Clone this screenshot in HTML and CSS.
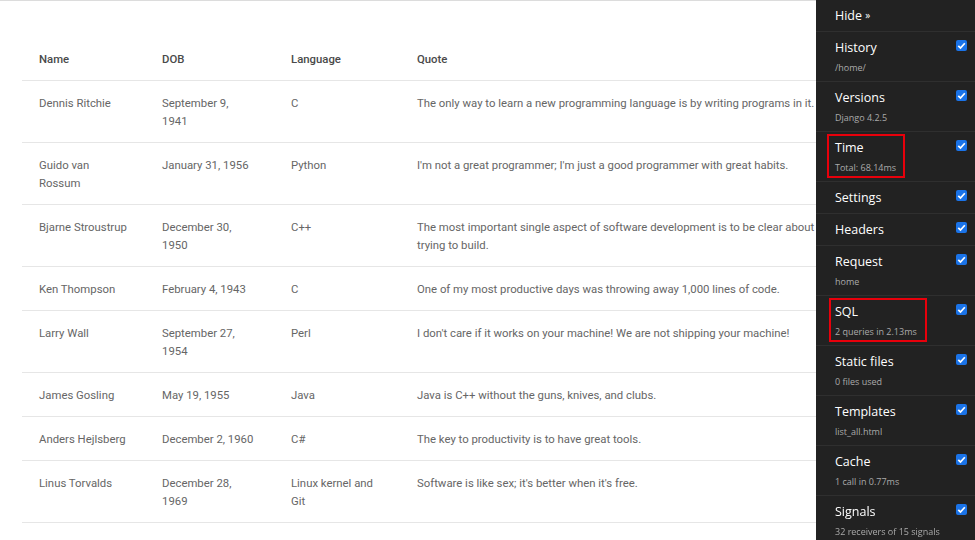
FILE: index.html
```html
<!DOCTYPE html>
<html>
<head>
<meta charset="utf-8">
<link rel="stylesheet" href="styles.css">
</head>
<body>
<div class="page">
  <table class="people">
    <colgroup>
      <col class="c-name"><col class="c-dob"><col class="c-lang"><col class="c-quote">
    </colgroup>
    <thead>
      <tr><th>Name</th><th>DOB</th><th>Language</th><th>Quote</th></tr>
    </thead>
    <tbody>
      <tr><td>Dennis Ritchie</td><td>September 9, 1941</td><td>C</td><td>The only way to learn a new programming language is by writing programs in it.</td></tr>
      <tr><td>Guido van Rossum</td><td>January 31, 1956</td><td>Python</td><td>I'm not a great programmer; I'm just a good programmer with great habits.</td></tr>
      <tr><td>Bjarne Stroustrup</td><td>December 30, 1950</td><td>C++</td><td>The most important single aspect of software development is to be clear about what you are trying to build.</td></tr>
      <tr><td>Ken Thompson</td><td>February 4, 1943</td><td>C</td><td>One of my most productive days was throwing away 1,000 lines of code.</td></tr>
      <tr><td>Larry Wall</td><td>September 27, 1954</td><td>Perl</td><td>I don't care if it works on your machine! We are not shipping your machine!</td></tr>
      <tr><td>James Gosling</td><td>May 19, 1955</td><td>Java</td><td>Java is C++ without the guns, knives, and clubs.</td></tr>
      <tr><td>Anders Hejlsberg</td><td>December 2, 1960</td><td>C#</td><td>The key to productivity is to have great tools.</td></tr>
      <tr><td>Linus Torvalds</td><td>December 28, 1969</td><td>Linux kernel and Git</td><td>Software is like sex; it's better when it's free.</td></tr>
    </tbody>
  </table>
</div>

<aside class="toolbar">
  <div class="hide">Hide <span class="raquo">&raquo;</span></div>
  <div class="panel"><div class="title">History</div><div class="sub">/home/</div><span class="check"><svg viewBox="0 0 11 11"><path d="M2.3 5.8 L4.5 8 L8.8 3.2" fill="none" stroke="#fff" stroke-width="1.7"/></svg></span></div>
  <div class="panel"><div class="title">Versions</div><div class="sub">Django 4.2.5</div><span class="check"><svg viewBox="0 0 11 11"><path d="M2.3 5.8 L4.5 8 L8.8 3.2" fill="none" stroke="#fff" stroke-width="1.7"/></svg></span></div>
  <div class="panel"><div class="title">Time</div><div class="sub">Total: 68.14ms</div><span class="check"><svg viewBox="0 0 11 11"><path d="M2.3 5.8 L4.5 8 L8.8 3.2" fill="none" stroke="#fff" stroke-width="1.7"/></svg></span><span class="mark mark-time"></span></div>
  <div class="panel short"><div class="title">Settings</div><span class="check"><svg viewBox="0 0 11 11"><path d="M2.3 5.8 L4.5 8 L8.8 3.2" fill="none" stroke="#fff" stroke-width="1.7"/></svg></span></div>
  <div class="panel short"><div class="title">Headers</div><span class="check"><svg viewBox="0 0 11 11"><path d="M2.3 5.8 L4.5 8 L8.8 3.2" fill="none" stroke="#fff" stroke-width="1.7"/></svg></span></div>
  <div class="panel"><div class="title">Request</div><div class="sub">home</div><span class="check"><svg viewBox="0 0 11 11"><path d="M2.3 5.8 L4.5 8 L8.8 3.2" fill="none" stroke="#fff" stroke-width="1.7"/></svg></span></div>
  <div class="panel"><div class="title">SQL</div><div class="sub">2 queries in 2.13ms</div><span class="check"><svg viewBox="0 0 11 11"><path d="M2.3 5.8 L4.5 8 L8.8 3.2" fill="none" stroke="#fff" stroke-width="1.7"/></svg></span><span class="mark mark-sql"></span></div>
  <div class="panel"><div class="title">Static files</div><div class="sub">0 files used</div><span class="check"><svg viewBox="0 0 11 11"><path d="M2.3 5.8 L4.5 8 L8.8 3.2" fill="none" stroke="#fff" stroke-width="1.7"/></svg></span></div>
  <div class="panel"><div class="title">Templates</div><div class="sub">list_all.html</div><span class="check"><svg viewBox="0 0 11 11"><path d="M2.3 5.8 L4.5 8 L8.8 3.2" fill="none" stroke="#fff" stroke-width="1.7"/></svg></span></div>
  <div class="panel"><div class="title">Cache</div><div class="sub">1 call in 0.77ms</div><span class="check"><svg viewBox="0 0 11 11"><path d="M2.3 5.8 L4.5 8 L8.8 3.2" fill="none" stroke="#fff" stroke-width="1.7"/></svg></span></div>
  <div class="panel"><div class="title">Signals</div><div class="sub">32 receivers of 15 signals</div><span class="check"><svg viewBox="0 0 11 11"><path d="M2.3 5.8 L4.5 8 L8.8 3.2" fill="none" stroke="#fff" stroke-width="1.7"/></svg></span></div>
</aside>
</body>
</html>
```
FILE: styles.css
```css
html, body {
  margin: 0;
  padding: 0;
  background: #fff;
  overflow: hidden;
}
body {
  border-top: 1px solid #dcdcdc;
  font-family: Roboto, "Liberation Sans", sans-serif;
}
.page {
  padding: 36px 22px 0 22px;
}
.people {
  border-collapse: collapse;
  table-layout: fixed;
  width: 887px;
  font-size: 11.35px;
  line-height: 18px;
  color: #666;
}
.c-name { width: 123px; }
.c-dob { width: 129px; }
.c-lang { width: 126px; }
.c-quote { width: auto; }
.people th,
.people td {
  text-align: left;
  vertical-align: top;
  padding: 13px 17px 12px 17px;
  border-bottom: 1px solid #e6e6e6;
}
.people td:nth-child(2) {
  padding-right: 20px;
}
.people th {
  font-weight: 500;
  color: #4a4a4a;
}

.toolbar {
  position: fixed;
  top: 0;
  right: 0;
  width: 159px;
  height: 100%;
  background: #222;
  font-family: "Open Sans", "Noto Sans", sans-serif;
  color: #fff;
}
.hide {
  height: 32px;
  box-sizing: border-box;
  padding: 7px 0 0 19px;
  font-size: 12.5px;
  line-height: 18px;
  border-bottom: 1px solid #2f2f2f;
}
.raquo {
  font-size: 10px;
  position: relative;
  top: -1px;
}
.panel {
  position: relative;
  height: 50px;
  box-sizing: border-box;
  padding: 7px 0 0 19px;
  border-bottom: 1px solid #2f2f2f;
}
.panel.short {
  height: 32px;
  padding-top: 7px;
}
.title {
  font-size: 12.5px;
  line-height: 18px;
}
.sub {
  font-size: 9px;
  line-height: 12px;
  margin-top: 5px;
  color: #aaa;
}
.check {
  position: absolute;
  top: 8px;
  right: 8px;
  width: 11px;
  height: 11px;
  border-radius: 2px;
  background: #1a73e8;
}
.check svg {
  display: block;
  width: 11px;
  height: 11px;
}
.mark {
  position: absolute;
  border: 2px solid #e8000b;
}
.mark-time {
  left: 11px;
  top: 2px;
  width: 74px;
  height: 40px;
}
.mark-sql {
  left: 13px;
  top: 2px;
  width: 94px;
  height: 40px;
}
```
